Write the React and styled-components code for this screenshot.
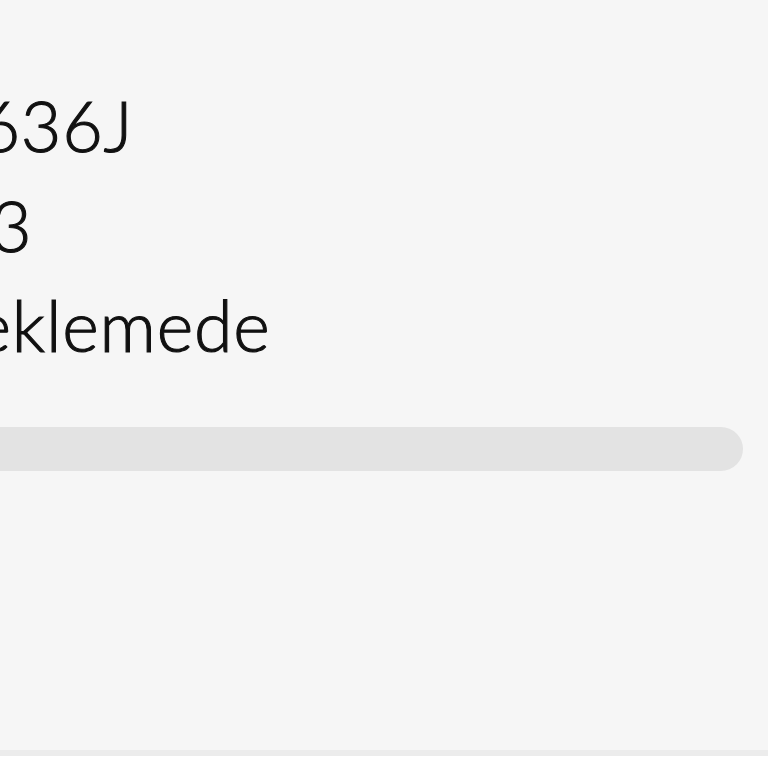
import React from "react";
import styled, { createGlobalStyle } from "styled-components";

const Global = createGlobalStyle`
  html, body { margin: 0; padding: 0; background: #ffffff; }
  body { font-family: Lato, "Noto Sans", sans-serif; overflow: hidden; }
`;

const Screen = styled.div`
  box-sizing: border-box;
  width: 768px;
  height: 756px;
  background: #f6f6f6;
  border-bottom: 6px solid #ececec;
  overflow: hidden;
  padding-top: 75px;
`;

const Details = styled.div`
  display: flex;
  flex-direction: column;
  padding-right: 25px;
`;

const Value = styled.div`
  font-family: Lato, "Noto Sans", sans-serif;
  font-size: 70px;
  line-height: 100px;
  font-weight: 300;
  letter-spacing: 0.8px;
  color: #111111;
  -webkit-text-stroke: 1.1px #111111;
  white-space: nowrap;
  margin-left: ${(p) => p.$shift}px;
`;

const Track = styled.div`
  margin-top: 52px;
  margin-left: -40px;
  height: 44px;
  border-radius: 22px;
  background: #e3e3e3;
`;

const rows = [
  { text: "6636J", shift: -62 },
  { text: "3", shift: -9 },
  { text: "Beklemede", shift: -70 },
];

export default function App() {
  return (
    <>
      <Global />
      <Screen>
        <Details>
          {rows.map((r) => (
            <Value key={r.text} $shift={r.shift}>
              {r.text}
            </Value>
          ))}
          <Track />
        </Details>
      </Screen>
    </>
  );
}
